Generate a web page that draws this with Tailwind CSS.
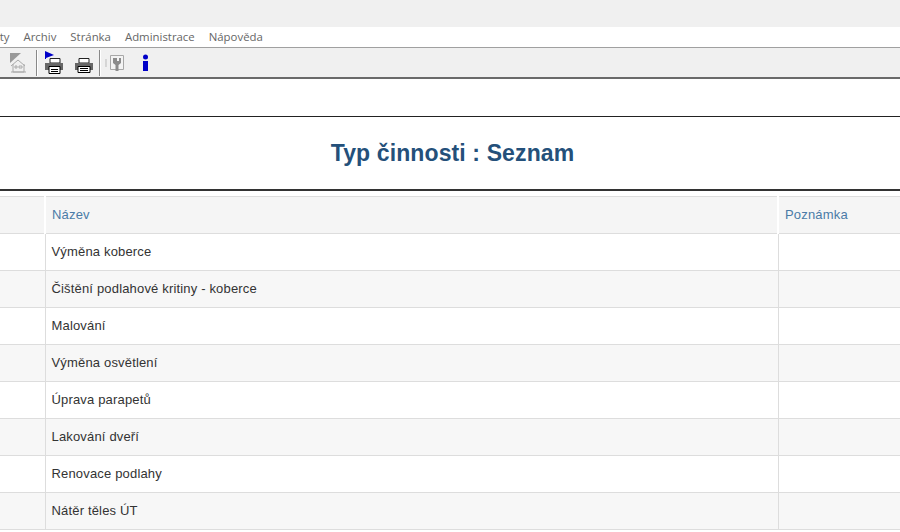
<!DOCTYPE html>
<html lang="cs">
    <head>
        <meta charset="UTF-8" />
        <title>Typ činnosti : Seznam</title>
        <script src="https://cdn.jsdelivr.net/npm/@tailwindcss/browser@4"></script>
    </head>
    <body class="h-[532px] w-[900px] overflow-hidden bg-white font-['Liberation_Sans',Arial,sans-serif] text-[#333]">
        <div class="h-[27px] bg-[#f0f0f0]"></div>

        <!-- menu -->
        <nav class="flex h-[21px] items-center gap-[14px] overflow-hidden border-b border-[#a0a0a0] font-['Open_Sans',sans-serif] text-[11.4px] text-[#666]">
            <span class="-ml-[29px]">Aktivity</span>
            <span>Archiv</span>
            <span>Stránka</span>
            <span>Administrace</span>
            <span>Nápověda</span>
        </nav>

        <!-- toolbar -->
        <div class="flex h-[31px] items-center border-b-2 border-[#6a6a6a] bg-[#f0f0f0]">
            <svg class="ml-[9px]" width="18" height="22" viewBox="0 0 18 22" fill="none">
                <path d="M1 1h11L1 11z" fill="#999" />
                <path d="M2 14l7-6 7 6M4 12v8h11v-8M2 20h15M6 14h2v2H6zM10 14h3v2h-3z" stroke="#aaa" />
            </svg>
            <div class="ml-[9px] h-[26px] w-[2px] border-l border-[#888] bg-white"></div>
            <svg class="ml-[6px]" width="20" height="24" viewBox="0 0 20 24" fill="none">
                <path d="M1 0l9 4-8 3v1H1z" fill="#0000c8" />
                <path d="M6 7.500h10V12H6z" fill="#fff" stroke="#222" />
                <path d="M1 12h18v7H1z" fill="#666" />
                <path d="M5 15.500h11v7H5z" fill="#fff" stroke="#000" />
                <path d="M7 18h7v1H7zM7 20h7v1H7z" fill="#000" />
            </svg>
            <svg class="ml-[11px]" width="18" height="24" viewBox="0 0 18 24" fill="none">
                <path d="M4 7.500h10V12H4z" fill="#fff" stroke="#222" />
                <path d="M0 12h18v7H0z" fill="#666" />
                <path d="M3 15.500h12v6H3z" fill="#fff" stroke="#000" />
                <path d="M5 17h8v1H5zM5 19h8v1H5z" fill="#000" />
            </svg>
            <div class="ml-[6px] h-[26px] w-[2px] border-l border-[#888] bg-white"></div>
            <svg class="ml-[4px]" width="20" height="20" viewBox="0 0 20 20" fill="none">
                <path d="M1 6v8" stroke="#bbb" />
                <path d="M5.500 2.500h13v14h-13z" fill="#f4f4f4" stroke="#a8a8a8" />
                <path d="M8 5v5l2.500 2v6h3v-6L16 10V5h-2v3h-2V5z" fill="#8c8c8c" />
            </svg>
            <svg class="ml-[17px]" width="7" height="18" viewBox="0 0 7 18">
                <circle cx="3.500" cy="3" r="2.500" fill="#0000c8" />
                <path d="M1 7h5v10H1z" fill="#0000c8" />
            </svg>
        </div>

        <div class="h-[38px] border-b border-[#222]"></div>

        <h1 class="flex h-[74px] items-center justify-center border-b-2 border-[#333] pt-[1px] pl-[5px] text-[23px] font-bold tracking-[0.12px] text-[#24507a]">Typ činnosti : Seznam</h1>

        <!-- table -->
        <table class="mt-[5px] w-full table-fixed border-collapse text-[13px] tracking-[0.17px]">
            <thead>
                <tr class="h-[37px] border-y border-[#ddd] bg-[#f5f5f5] text-left text-[#4a7ba7]">
                    <th class="w-[45px] border-r-2 border-white"></th>
                    <th class="w-[733px] border-r-2 border-white px-[6px] font-normal">Název</th>
                    <th class="px-[6px] font-normal">Poznámka</th>
                </tr>
            </thead>
            <tbody>
                <tr class="h-[37px] border-b border-[#ddd]"><td class="border-r border-[#ddd]"></td><td class="border-r border-[#ddd] px-[6px]">Výměna koberce</td><td></td></tr>
                <tr class="h-[37px] border-b border-[#ddd] bg-[#f7f7f7]"><td class="border-r border-[#ddd]"></td><td class="border-r border-[#ddd] px-[6px]">Čištění podlahové kritiny - koberce</td><td></td></tr>
                <tr class="h-[37px] border-b border-[#ddd]"><td class="border-r border-[#ddd]"></td><td class="border-r border-[#ddd] px-[6px]">Malování</td><td></td></tr>
                <tr class="h-[37px] border-b border-[#ddd] bg-[#f7f7f7]"><td class="border-r border-[#ddd]"></td><td class="border-r border-[#ddd] px-[6px]">Výměna osvětlení</td><td></td></tr>
                <tr class="h-[37px] border-b border-[#ddd]"><td class="border-r border-[#ddd]"></td><td class="border-r border-[#ddd] px-[6px]">Úprava parapetů</td><td></td></tr>
                <tr class="h-[37px] border-b border-[#ddd] bg-[#f7f7f7]"><td class="border-r border-[#ddd]"></td><td class="border-r border-[#ddd] px-[6px]">Lakování dveří</td><td></td></tr>
                <tr class="h-[37px] border-b border-[#ddd]"><td class="border-r border-[#ddd]"></td><td class="border-r border-[#ddd] px-[6px]">Renovace podlahy</td><td></td></tr>
                <tr class="h-[37px] border-b border-[#ddd] bg-[#f7f7f7]"><td class="border-r border-[#ddd]"></td><td class="border-r border-[#ddd] px-[6px]">Nátěr těles ÚT</td><td></td></tr>
            </tbody>
        </table>
    </body>
</html>
